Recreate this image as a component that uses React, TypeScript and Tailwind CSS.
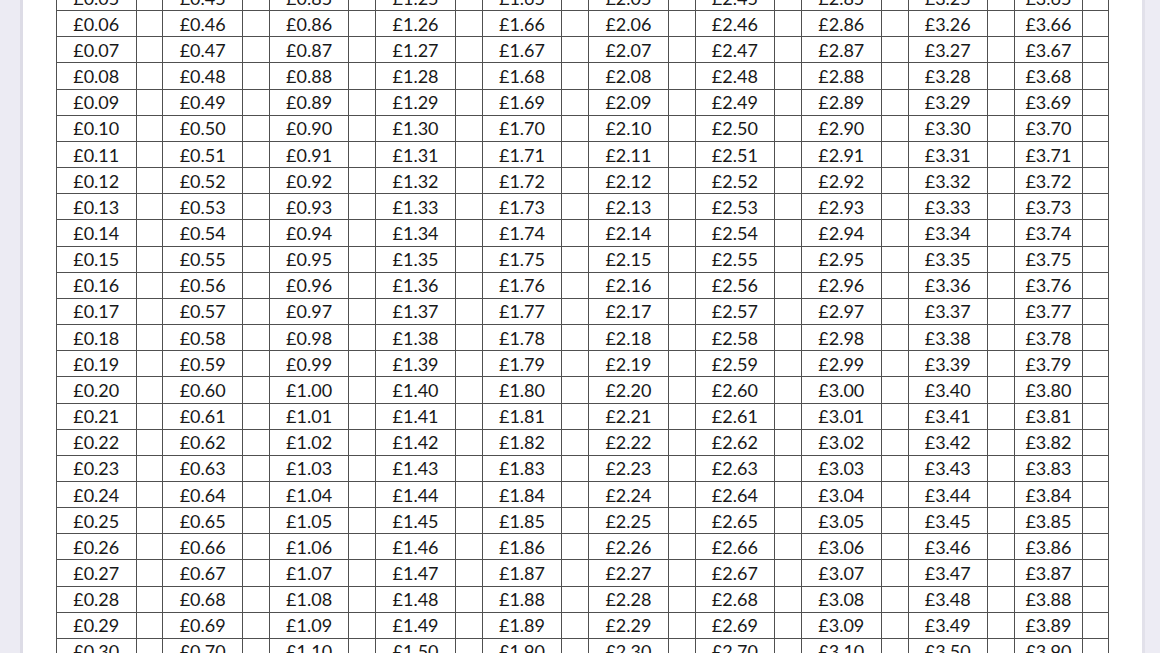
import React from "react";

const rows: number[] = [];
for (let i = 5; i <= 31; i++) rows.push(i);

function fmt(p: number) {
  return "£" + (p / 100).toFixed(2);
}

export default function App() {
  return (
    <div className="w-[1160px] h-[653px] overflow-hidden bg-[#ecebf3] flex">
      <div className="w-[20px] shrink-0" />
      <div className="w-[3px] shrink-0 bg-[#dddce6]" />
      <div className="w-[1119px] shrink-0 bg-white h-full overflow-hidden pl-[33px]">
        <div
          className="-mt-[16px] grid w-fit bg-[#505050] gap-px border border-[#505050]"
          style={{ gridTemplateColumns: "repeat(9, 78.5px 25.94px) 67px 25px" }}
        >
          {rows.map((r) =>
            Array.from({ length: 10 }).map((_, c) => (
              <React.Fragment key={r + "-" + c}>
                <div className="bg-white h-[25.17px] flex items-center justify-center text-[18px] text-[#181818] font-['Lato',sans-serif] leading-none">
                  {fmt(r + c * 40)}
                </div>
                <div className="bg-white h-[25.17px]" />
              </React.Fragment>
            ))
          )}
        </div>
      </div>
      <div className="w-[3px] shrink-0 bg-[#e2e1ea]" />
      <div className="flex-1 bg-[#edecf4]" />
    </div>
  );
}
